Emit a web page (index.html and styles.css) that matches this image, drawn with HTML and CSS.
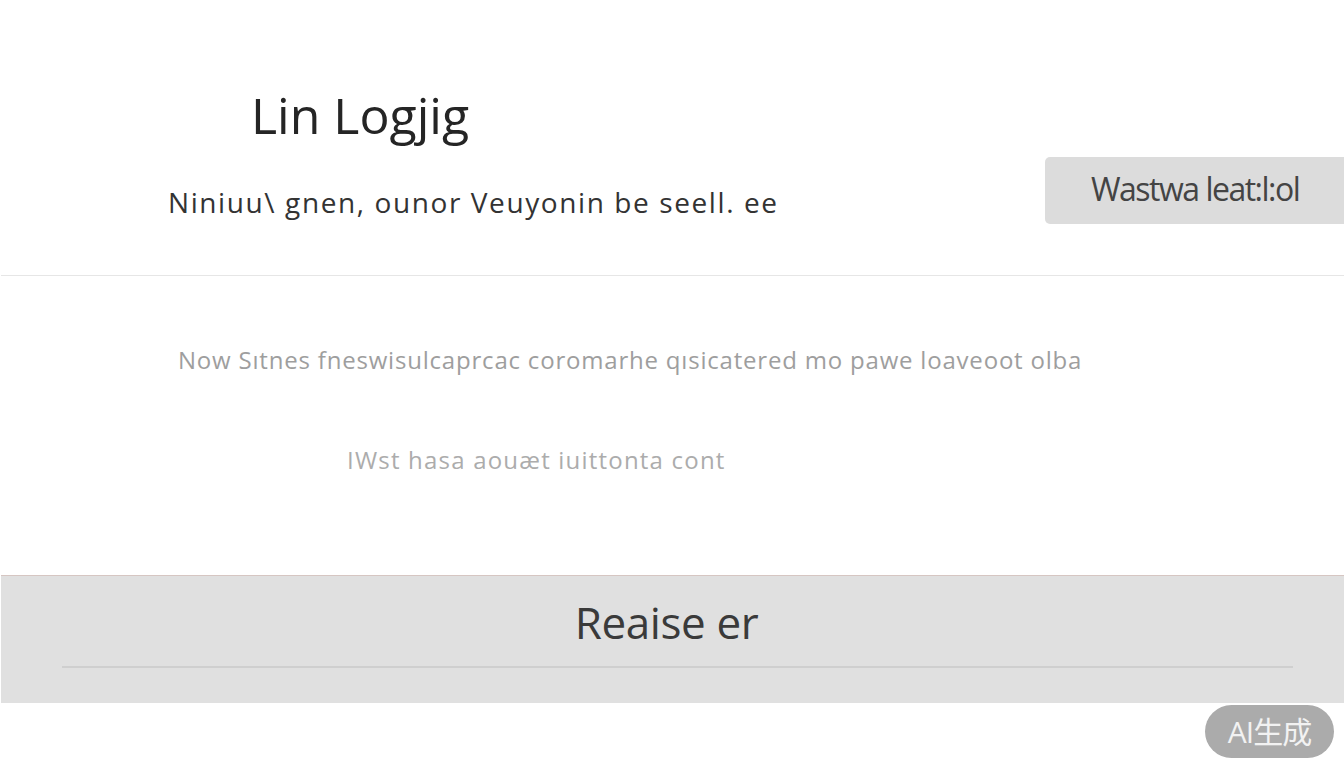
FILE: index.html
```html
<!DOCTYPE html>
<html lang="en">
<head>
<meta charset="utf-8">
<title>Lin Logjig</title>
<link rel="stylesheet" href="styles.css">
</head>
<body>
<div class="page">
  <header class="top">
    <div class="intro">
      <h1 class="title">Lin Logjig</h1>
      <p class="subtitle">Niniuu\ gnen, ounor Veuyonin be seell. ee</p>
    </div>
    <button class="side-btn" type="button">Wastwa leat:l:ol</button>
  </header>
  <main class="body">
    <p class="note">Now Sıtnes fneswisulcaprcac coromarhe qısicatered mo pawe loaveoot olba</p>
    <p class="note faint">IWst hasa aouæt iuittonta cont</p>
  </main>
  <footer class="band">
    <div class="band-label">Reaise er</div>
    <div class="band-rule"></div>
  </footer>
</div>
<div class="ai-badge">AI生成</div>
</body>
</html>
```
FILE: styles.css
```css
* { box-sizing: border-box; }
html, body { margin: 0; padding: 0; background: #ffffff; }
body {
  font-family: "Open Sans", "Noto Sans", "Noto Sans CJK SC", sans-serif;
  color: #222;
  width: 1344px;
  height: 768px;
  overflow: hidden;
}
.page { display: flex; flex-direction: column; }

.top {
  height: 276px;
  display: flex;
  justify-content: space-between;
  align-items: flex-start;
  border-bottom: 1px solid #e6e6e6;
  margin-left: 1px;
}
.intro { display: flex; flex-direction: column; padding-top: 80px; }
.title {
  margin: 0 0 0 250px;
  font-size: 50px;
  font-weight: 400;
  line-height: 70px;
  color: #252525;
}
.subtitle {
  margin: 35px 0 0 167px;
  font-size: 28px;
  line-height: 34px;
  letter-spacing: 1.6px;
  color: #333;
}
.side-btn {
  margin-top: 157px;
  width: 299px;
  height: 67px;
  border: none;
  border-radius: 5px 0 0 5px;
  background: #dcdcdc;
  font-family: "Open Sans", sans-serif;
  font-size: 32px;
  letter-spacing: -1.5px;
  color: #444;
  text-align: left;
  padding: 0 0 4px 46px;
}

.body {
  height: 299px;
  display: flex;
  flex-direction: column;
  padding-top: 68px;
}
.note {
  margin: 0 0 0 178px;
  font-size: 24px;
  line-height: 32px;
  letter-spacing: 0.8px;
  color: #9e9e9e;
}
.note.faint {
  margin: 68px 0 0 347px;
  letter-spacing: 1.2px;
  color: #acacac;
}

.band {
  height: 128px;
  background: #e0e0e0;
  border-top: 1px solid #d6c6c2;
  display: flex;
  flex-direction: column;
  align-items: center;
  margin-left: 1px;
}
.band-label {
  margin-top: 21px;
  margin-right: 12px;
  font-size: 44px;
  line-height: 50px;
  letter-spacing: -0.4px;
  color: #3a3a3a;
}
.band-rule {
  margin-top: 19px;
  margin-left: 10px;
  width: 1231px;
  height: 2px;
  background: #cfcfcf;
}

.ai-badge {
  position: absolute;
  left: 1205px;
  top: 705px;
  width: 129px;
  height: 53px;
  border-radius: 27px;
  background: #ababab;
  color: #f2f2f2;
  font-size: 30px;
  line-height: 53px;
  text-align: center;
  letter-spacing: -1px;
}
```
